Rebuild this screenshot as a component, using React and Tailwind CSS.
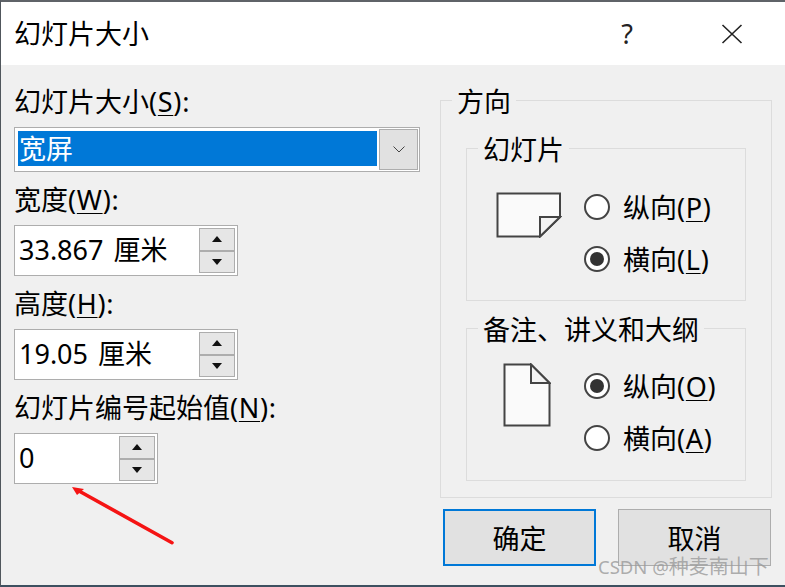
const FONT = "font-['Noto_Sans','Noto_Sans_CJK_SC',sans-serif]";

function Label({ children }) {
  return <div className="mt-[10px] mb-[7px] h-[36px] text-[27px] leading-[36px] whitespace-nowrap">{children}</div>;
}

function U({ children }) {
  return <span className="underline underline-offset-[3px] decoration-1">{children}</span>;
}

function Key({ k, colon }) {
  return (
    <span className="tracking-[0.7px]">
      (<U>{k}</U>){colon ? ":" : ""}
    </span>
  );
}

function SpinButton({ up }) {
  return (
    <div className="flex-1 flex items-center justify-center bg-[#e6e6e6] border border-[#adadad]">
      <svg width="10" height="6" viewBox="0 0 10 6">
        <path d={up ? "M5 0 L10 6 L0 6 Z" : "M0 0 L10 0 L5 6 Z"} fill="#111" />
      </svg>
    </div>
  );
}

function Spin({ value, width }) {
  return (
    <div className={`${width} h-[51px] flex bg-white border border-[#adadad] p-[2px]`}>
      <div className="flex-1 pl-[2px] -mt-[1px] text-[27px] leading-[45px] whitespace-nowrap [word-spacing:3px]">{value}</div>
      <div className="w-[36px] flex flex-col">
        <SpinButton up />
        <SpinButton />
      </div>
    </div>
  );
}

function Legend({ children, outer }) {
  return (
    <legend className={`${outer ? "-ml-[14px]" : "ml-[11px]"} px-[5px] pt-[5px] h-[42px] box-border text-[27px] leading-[36px] whitespace-nowrap`}>
      {children}
    </legend>
  );
}

function Radio({ checked, children }) {
  return (
    <div className="h-[52px] flex items-center">
      <div className="w-[26px] h-[26px] rounded-full bg-white border-[2px] border-[#444] flex items-center justify-center">
        {checked && <div className="w-[14px] h-[14px] rounded-full bg-[#333]" />}
      </div>
      <div className="ml-[13px] pt-[2px] text-[27px] leading-[36px] whitespace-nowrap">{children}</div>
    </div>
  );
}

export default function App() {
  return (
    <div className={`${FONT} relative w-[785px] h-[587px] overflow-hidden bg-[#f0f0f0] text-black border-t-2 border-t-[#5f6368] border-l border-l-[#50565c] border-b-2 border-b-[#3d5060]`}>
      <div className="h-[63px] bg-white flex items-center pl-[13px]">
        <div className="text-[27px] leading-[36px] pt-[1px]">幻灯片大小</div>
        <div className="ml-auto text-[27px] leading-[36px] mr-[88px] text-[#222]">?</div>
        <svg width="22" height="20" viewBox="0 0 22 20" className="mr-[42px]">
          <path d="M1.5 1 L20.5 19 M20.5 1 L1.5 19" stroke="#222" strokeWidth="1.6" fill="none" />
        </svg>
      </div>

      <div className="flex pt-[20px] pl-[13px]">
        <div className="w-[406px] shrink-0">
          <div className="-mt-[1px] h-[36px] mb-[7px] text-[27px] leading-[36px] whitespace-nowrap">幻灯片大小<Key k="S" colon /></div>
          <div className="h-[45px] flex bg-white border border-[#adadad] pl-[3px] py-[3px] pr-[1px]">
            <div className="w-[359px] h-[35px] bg-[#0078d7] text-white text-[27px] leading-[35px] pl-[1px]">宽屏</div>
            <div className="ml-[2px] w-[39px] -mt-[2px] h-[41px] flex items-center justify-center bg-[#e1e1e1] border border-[#adadad]">
              <svg width="12" height="7" viewBox="0 0 12 7">
                <path d="M0.5 0.5 L6 6 L11.5 0.5" stroke="#444" strokeWidth="1" fill="none" />
              </svg>
            </div>
          </div>
          <Label>宽度<Key k="W" colon /></Label>
          <Spin value="33.867 厘米" width="w-[224px]" />
          <Label>高度<Key k="H" colon /></Label>
          <Spin value="19.05 厘米" width="w-[224px]" />
          <Label>幻灯片编号起始值<Key k="N" colon /></Label>
          <Spin value="0" width="w-[144px]" />
        </div>

        <div className="ml-[20px] -mt-[6px]">
          <fieldset className="w-[332px] h-[419px] border border-[#dcdcdc] pl-[25px]">
            <Legend outer>方向</Legend>
            <fieldset className="mt-[6px] w-[280px] h-[174px] border border-[#dcdcdc]">
              <Legend>幻灯片</Legend>
              <div className="flex pt-[12px]">
                <div className="w-[117px] shrink-0 pt-[11px] pl-[29px]">
                  <svg width="66" height="46" viewBox="0 0 66 46">
                    <path d="M1.5 1.5 H64 V25 L44 44.5 H1.5 Z" fill="#fafafa" stroke="#444" strokeWidth="2" />
                    <path d="M44 44.5 V25 H64 Z" fill="#f3f3f3" stroke="#444" strokeWidth="2" />
                  </svg>
                </div>
                <div>
                  <Radio>纵向<Key k="P" /></Radio>
                  <Radio checked>横向<Key k="L" /></Radio>
                </div>
              </div>
            </fieldset>
            <fieldset className="mt-[6px] w-[280px] h-[174px] border border-[#dcdcdc]">
              <Legend>备注、讲义和大纲</Legend>
              <div className="flex pt-[11px]">
                <div className="w-[117px] shrink-0 pt-[3px] pl-[36px]">
                  <svg width="48" height="64" viewBox="0 0 48 64">
                    <path d="M1.5 1.5 H28 L46.5 20 V62.5 H1.5 Z" fill="#fafafa" stroke="#444" strokeWidth="2" />
                    <path d="M28 1.5 V20 H46.5 Z" fill="#f3f3f3" stroke="#444" strokeWidth="2" />
                  </svg>
                </div>
                <div>
                  <Radio checked>纵向<Key k="O" /></Radio>
                  <Radio>横向<Key k="A" /></Radio>
                </div>
              </div>
            </fieldset>
          </fieldset>
          <div className="flex gap-[22px] mt-[11px] ml-[3px]">
            <div className="w-[153px] h-[57px] flex items-center justify-center pt-[3px] bg-[#e1e1e1] border-2 border-[#0078d7] text-[27px]">确定</div>
            <div className="w-[153px] h-[57px] flex items-center justify-center pt-[3px] bg-[#e1e1e1] border border-[#adadad] text-[27px]">取消</div>
          </div>
        </div>
      </div>

      <svg width="120" height="70" viewBox="0 0 120 70" className="absolute left-[60px] top-[482px]">
        <path d="M111 58.7 L18 7" stroke="#f51414" strokeWidth="3.6" strokeLinecap="round" />
        <path d="M11 3 L23 5 L16 11 Z" fill="#f51414" />
      </svg>

      <div className="absolute left-[597px] top-[551px] text-[20px] leading-[28px] whitespace-nowrap text-[#9a9a9a]/80">
        <span className="text-[18.5px]">CSDN @</span>种麦南山下
      </div>
    </div>
  );
}
